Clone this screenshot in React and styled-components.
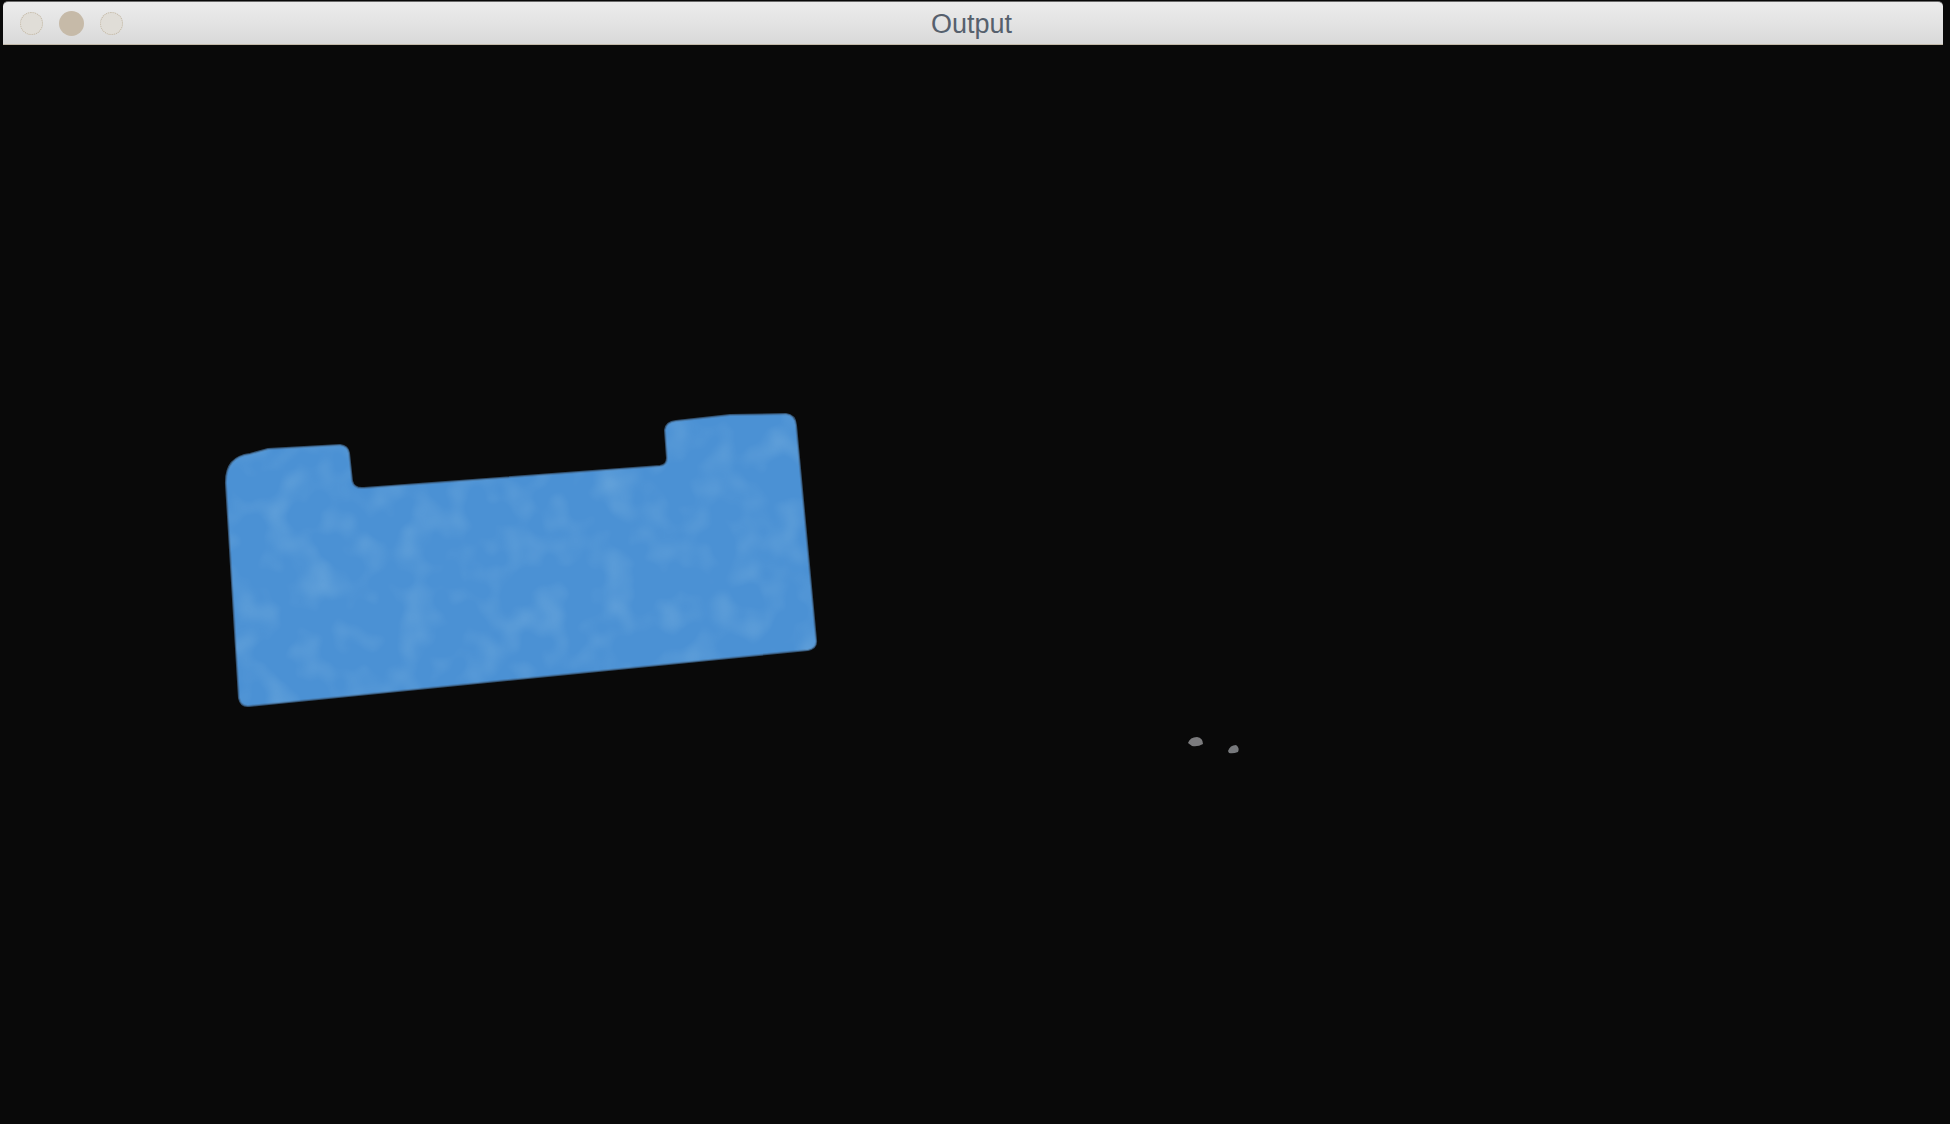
import React from "react";
import styled, { createGlobalStyle } from "styled-components";

const Global = createGlobalStyle`
html, body {
  margin: 0;
  padding: 0;
  background: #090909;
}
body {
  font-family: "Liberation Sans", Arial, sans-serif;
}
`;

const Page = styled.div`
display: flex;
flex-direction: column;
width: 1950px;
height: 1124px;
background: #090909;
overflow: hidden;
`;

const TitleBar = styled.div`
position: relative;
display: flex;
align-items: center;
justify-content: center;
height: 42px;
margin: 1px 7px 0 3px;
border-top: 1px solid #6b6b6b;
border-bottom: 1px solid #c2b9a9;
border-radius: 5px 5px 0 0;
background: linear-gradient(#ececec 0%, #e4e4e4 45%, #d9d9d9 100%);
box-sizing: content-box;
`;

const Lights = styled.div`
position: absolute;
left: 17px;
top: 9px;
display: flex;
gap: 16px;
`;

const Light = styled.span`
width: ${(p) => (p.$filled ? 25 : 23)}px;
height: ${(p) => (p.$filled ? 25 : 23)}px;
border-radius: 50%;
box-sizing: border-box;
background: ${(p) => (p.$filled ? "#c6baa8" : "#e0ddd7")};
border: ${(p) => (p.$filled ? "none" : "1px dotted #c2b7a4")};
margin-top: ${(p) => (p.$filled ? 0 : 1)}px;
`;

const Title = styled.span`
font-family: "Liberation Sans", Arial, sans-serif;
font-size: 27px;
color: #56606d;
line-height: 1;
margin-left: -3px;
margin-top: 2px;
`;

const Canvas = styled.div`
flex: 1;
display: flex;
background: #090909;
`;

const Frame = styled.svg`
display: block;
width: 1950px;
height: 1079px;
`;

const shape = `
M 226 484
Q 225 457 250 454
L 268 449
L 340 445
Q 348 446 349 453
L 352 481
Q 354 489 364 488
L 660 466
Q 667 465 667 458
L 665 430
Q 666 422 676 421
L 730 415
L 786 414
Q 795 415 796 425
L 816 640
Q 817 648 808 650
L 249 706
Q 241 707 239 698
Z`;

const OutputImage = () => (
  <Frame viewBox="0 45 1950 1079">
    <defs>
      <filter id="mottle" x="0" y="0" width="100%" height="100%">
        <feTurbulence type="fractalNoise" baseFrequency="0.03" numOctaves="2" seed="7" result="n" />
        <feColorMatrix
          in="n"
          type="matrix"
          values="0 0 0 0 0.25  0 0 0 0 0.5  0 0 0 0 0.77  0 0 0 1.6 -0.7"
        />
        <feComposite in2="SourceGraphic" operator="in" />
      </filter>
    </defs>
    <path d={shape} fill="#4b91d4" stroke="#45729f" strokeWidth="2" strokeOpacity="0.7" />
    <path d={shape} fill="#4b91d4" filter="url(#mottle)" opacity="0.45" />
    <path d="M 1188 743 Q 1190 737 1197 737 Q 1203 738 1203 744 Q 1198 747 1192 746 Z" fill="#7b7b7d" />
    <path d="M 1228 751 Q 1230 745 1236 745 Q 1240 748 1238 752 Q 1233 754 1229 753 Z" fill="#77797c" />
  </Frame>
);

export default function App() {
  return (
    <>
      <Global />
      <Page>
        <TitleBar>
          <Lights>
            <Light />
            <Light $filled />
            <Light />
          </Lights>
          <Title>Output</Title>
        </TitleBar>
        <Canvas>
          <OutputImage />
        </Canvas>
      </Page>
    </>
  );
}
